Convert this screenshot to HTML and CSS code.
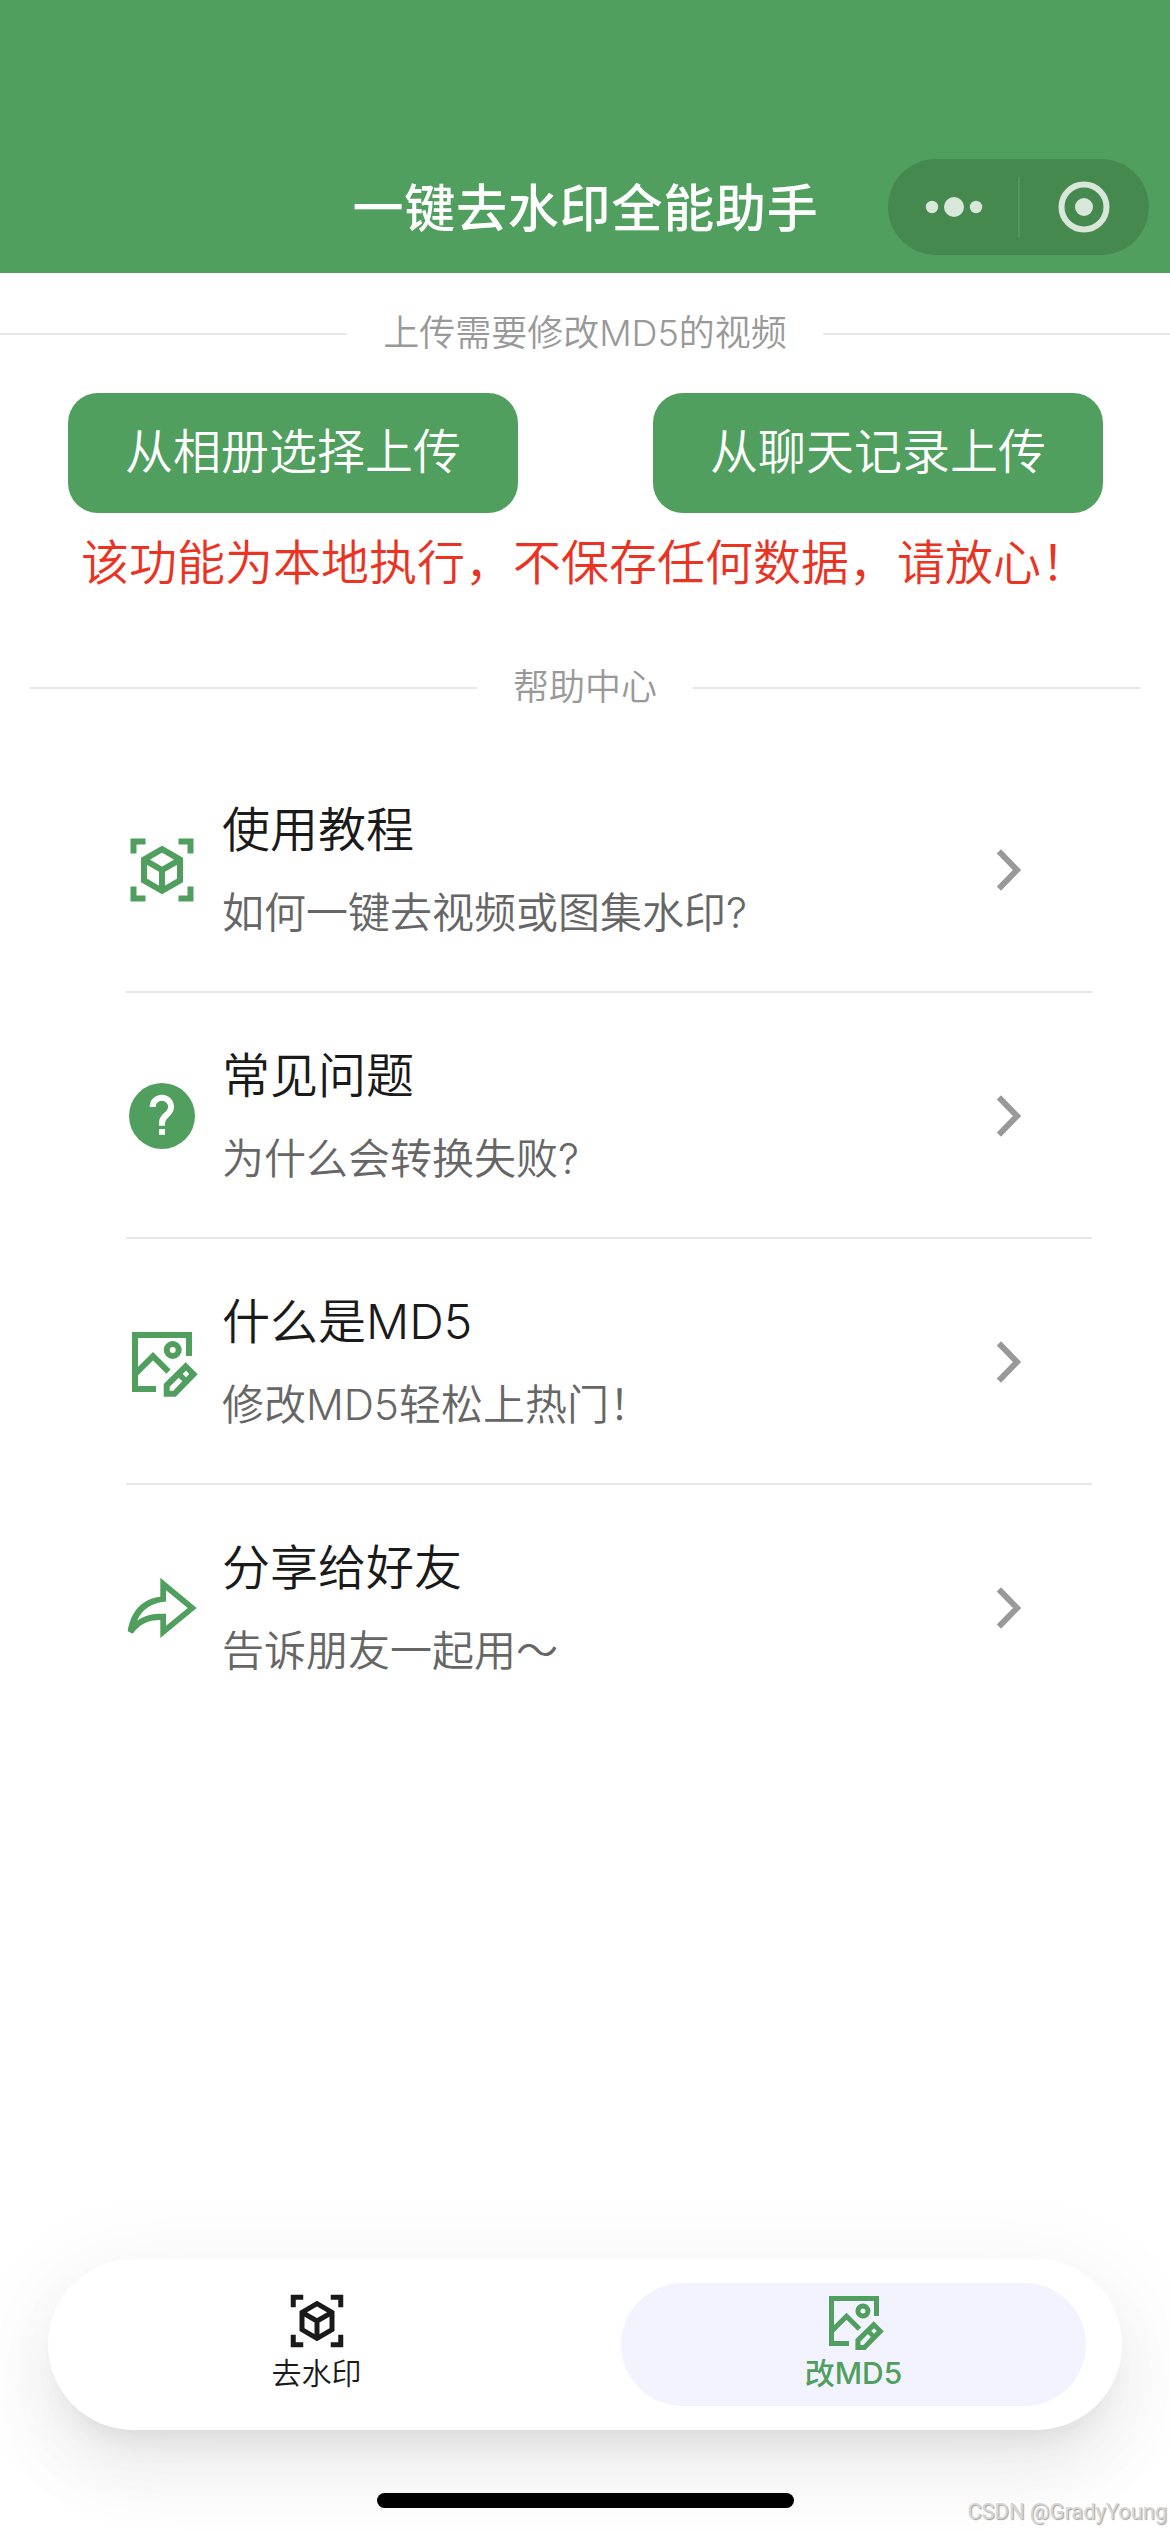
FILE: index.html
```html
<!DOCTYPE html>
<html lang="zh-CN">
<head>
<meta charset="utf-8">
<title>一键去水印全能助手</title>
<link rel="stylesheet" href="styles.css">
</head>
<body>
<svg class="sprite" aria-hidden="true">
  <symbol id="scan-cube" viewBox="0 0 72 72">
    <g fill="none" stroke="currentColor" stroke-width="6">
      <path d="M7.5 19.5V7.5H19.5M52.5 7.5H64.5V19.5M64.5 52.5V64.5H52.5M19.5 64.5H7.5V52.5"/>
      <path d="M36 15.2L54 25.6V46.4L36 56.8L18 46.4V25.6ZM18 25.6L36 36L54 25.6M36 36V56.8"/>
    </g>
  </symbol>
  <symbol id="help" viewBox="0 0 72 72">
    <circle cx="36" cy="36" r="33" fill="currentColor"/>
    <path d="M26.6 26.9A9.2 9.2 0 0 1 45 27C45 31.2 42.6 33.2 40 35.4C37.4 37.6 36 39.6 36 43V45.7" fill="none" stroke="#fff" stroke-width="6"/>
    <path d="M33 49H39V54.8H33Z" fill="#fff"/>
  </symbol>
  <symbol id="image-edit" viewBox="0 0 72 72">
    <g fill="none" stroke="currentColor" stroke-width="6">
      <path d="M63 30V9H9V63H30"/>
      <path d="M9 48.2L27 30.2L42.5 45.7"/>
      <circle cx="46.7" cy="24" r="6"/>
    </g>
    <path fill="currentColor" fill-rule="evenodd" d="M59.7 36.3L71.7 48.3L49.7 70.7H37.7V58ZM60 44.7L56.7 48L60 51.3L63.3 48ZM52.7 51.7L43.7 60.7V64.7H47.3L56.3 55.3Z"/>
  </symbol>
  <symbol id="share" viewBox="0 0 72 72">
    <path fill="currentColor" fill-rule="evenodd" d="M34.3 5.7L70.7 36L34.3 66V48C22 48 14 52 6.7 61.7L1.7 59.3C4.5 40 16 26.5 34.3 24.7ZM40 18.3V29.5C25 31 16 37.5 11 48.7C19 43 28 41.3 40 41.7V53.7L61.7 36Z"/>
  </symbol>
  <symbol id="chevron" viewBox="0 0 72 72">
    <path d="M26.9 17.4L45 36L26.9 54.6" fill="none" stroke="currentColor" stroke-width="6"/>
  </symbol>
</svg>

<div class="page">
  <header class="nav">
    <h1 class="nav-title">一键去水印全能助手</h1>
    <div class="capsule">
      <div class="capsule-half">
        <svg class="capsule-more" viewBox="0 0 60 24"><circle cx="9" cy="12" r="6.2"/><circle cx="31" cy="12" r="10"/><circle cx="53" cy="12" r="6.2"/></svg>
      </div>
      <div class="capsule-line"></div>
      <div class="capsule-half">
        <svg class="capsule-close" viewBox="0 0 52 52"><circle cx="26" cy="26" r="22.5" class="ring"/><circle cx="26" cy="26" r="9"/></svg>
      </div>
    </div>
  </header>

  <main class="content">
    <div class="divider">上传需要修改MD5的视频</div>
    <div class="actions">
      <button class="btn">从相册选择上传</button>
      <button class="btn">从聊天记录上传</button>
    </div>
    <p class="notice">该功能为本地执行，不保存任何数据，请放心！</p>
    <div class="divider divider-help">帮助中心</div>
    <div class="list">
      <div class="cell">
        <svg class="cell-icon"><use href="#scan-cube"/></svg>
        <div class="cell-body"><div class="cell-title">使用教程</div><div class="cell-desc">如何一键去视频或图集水印?</div></div>
        <svg class="cell-arrow"><use href="#chevron"/></svg>
      </div>
      <div class="cell">
        <svg class="cell-icon"><use href="#help"/></svg>
        <div class="cell-body"><div class="cell-title">常见问题</div><div class="cell-desc">为什么会转换失败?</div></div>
        <svg class="cell-arrow"><use href="#chevron"/></svg>
      </div>
      <div class="cell">
        <svg class="cell-icon"><use href="#image-edit"/></svg>
        <div class="cell-body"><div class="cell-title">什么是MD5</div><div class="cell-desc">修改MD5轻松上热门！</div></div>
        <svg class="cell-arrow"><use href="#chevron"/></svg>
      </div>
      <div class="cell">
        <svg class="cell-icon"><use href="#share"/></svg>
        <div class="cell-body"><div class="cell-title">分享给好友</div><div class="cell-desc">告诉朋友一起用～</div></div>
        <svg class="cell-arrow"><use href="#chevron"/></svg>
      </div>
    </div>
  </main>

  <footer class="bottom">
    <nav class="tabbar">
      <div class="tab"><svg class="tab-icon"><use href="#scan-cube"/></svg><span class="tab-label">去水印</span></div>
      <div class="tab tab-active"><svg class="tab-icon"><use href="#image-edit"/></svg><span class="tab-label">改MD5</span></div>
    </nav>
    <div class="home-indicator"></div>
  </footer>
  <div class="watermark">CSDN @GradyYoung</div>
</div>
</body>
</html>
```
FILE: styles.css
```css
* { box-sizing: border-box; }

body {
  margin: 0;
  background: #fff;
  font-family: Inter, "Noto Sans CJK SC", sans-serif;
  font-weight: 350;
  color: #1a1a1a;
}

.sprite { display: none; }

.page {
  position: relative;
  display: flex;
  flex-direction: column;
  width: 1170px;
  height: 2532px;
  overflow: hidden;
}

/* Navigation bar */
.nav {
  display: grid;
  grid-template-columns: 1fr auto 1fr;
  align-items: center;
  height: 273px;
  padding: 141px 21px 0 22px;
  background: #509f5e;
}
.nav-title {
  grid-column: 2;
  margin: 3px 0 0;
  font-size: 51px;
  font-weight: 500;
  line-height: 72px;
  letter-spacing: 0.8px;
  color: #fff;
}
.capsule {
  display: flex;
  justify-self: end;
  align-items: center;
  width: 261px;
  height: 96px;
  border-radius: 48px;
  background: #45894f;
}
.capsule-half { display: flex; flex: 1; justify-content: center; }
.capsule-line { width: 2px; height: 60px; background: #54935e; }
.capsule-more { width: 60px; height: 24px; fill: #d8e7da; }
.capsule-close { width: 52px; height: 52px; fill: #d8e7da; }
.ring { fill: none; stroke: #d8e7da; stroke-width: 6; }

/* Upload section */
.content { flex: 1; padding-top: 33px; }
.divider {
  display: flex;
  align-items: center;
  gap: 36px;
  height: 54px;
  font-size: 36px;
  line-height: 54px;
  white-space: nowrap;
  color: #999;
}
.divider::before,
.divider::after {
  content: "";
  flex: 1;
  height: 2px;
  margin-top: 1px;
  background: #e7e7e7;
}
.divider-help { margin: 58px 30px 0; }
.actions {
  display: flex;
  justify-content: space-between;
  padding: 33px 67px 0 68px;
}
.btn {
  width: 450px;
  height: 120px;
  padding: 0 0 2px;
  border: 0;
  border-radius: 30px;
  background: #509f5e;
  font: inherit;
  font-size: 48px;
  line-height: 118px;
  color: #fff;
}
.notice {
  margin: 11px 0 0;
  font-size: 48px;
  line-height: 78px;
  text-align: center;
  color: #ea3323;
}

/* Help list */
.list { padding: 33px 78px 0 126px; }
.cell {
  display: flex;
  align-items: center;
  height: 246px;
  padding-right: 48px;
}
.cell:not(:last-child) {
  background: linear-gradient(#e7e7e7, #e7e7e7) left bottom / 966px 2px no-repeat;
}
.cell-icon { width: 72px; height: 72px; color: #509f5e; }
.cell-body { flex: 1; margin-left: 24px; }
.cell-title { font-size: 48px; line-height: 72px; }
.cell-desc { margin-top: 14px; font-size: 42px; line-height: 66px; color: #666; }
.cell-arrow { width: 72px; height: 72px; color: #999; }

/* Bottom tab bar */
.bottom { height: 273px; padding: 0 48px; }
.tabbar {
  display: flex;
  justify-content: space-between;
  height: 171px;
  padding: 24px 36px;
  border-radius: 86px;
  background: #fff;
  box-shadow:
    0 18px 90px 15px rgba(0, 0, 0, 0.05),
    0 48px 72px 6px rgba(0, 0, 0, 0.04),
    0 24px 30px -15px rgba(0, 0, 0, 0.08);
}
.tab {
  display: flex;
  flex-direction: column;
  align-items: center;
  width: 465px;
  height: 123px;
  padding-top: 8px;
  border-radius: 62px;
}
.tab-icon { width: 60px; height: 60px; }
.tab-label { font-size: 30px; line-height: 44px; }
.tab-active { background: #f2f3ff; color: #509f5e; font-weight: 500; }
.home-indicator {
  width: 417px;
  height: 15px;
  margin: 63px auto 0;
  border-radius: 8px;
  background: #000;
}

.watermark {
  position: absolute;
  right: 3px;
  bottom: 6px;
  font-family: Roboto, sans-serif;
  font-weight: 400;
  font-size: 22px;
  line-height: 28px;
  letter-spacing: -0.1px;
  color: #d6d6d6;
  text-shadow: 1px 1px 1px #a0a0a0;
}
```
